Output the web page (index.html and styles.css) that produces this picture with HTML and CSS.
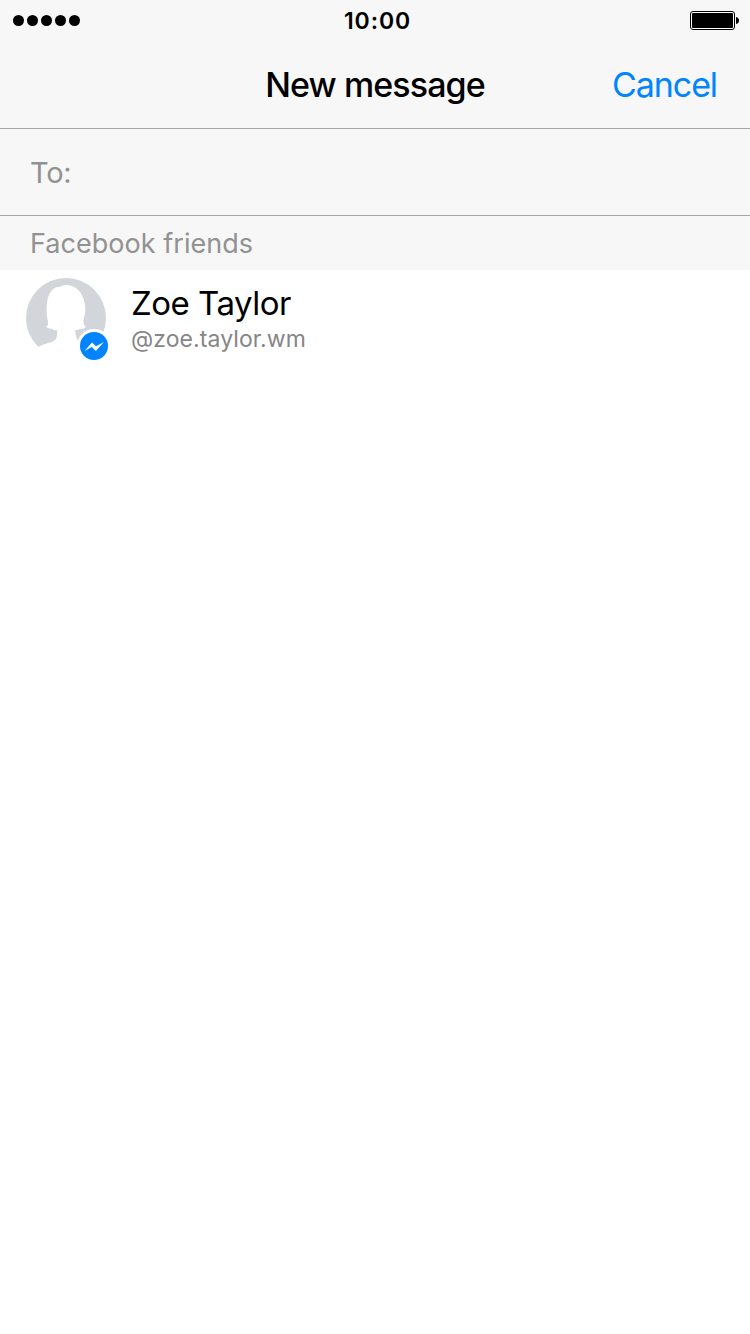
FILE: index.html
```html
<!DOCTYPE html>
<html lang="en">
<head>
  <meta charset="UTF-8">
  <meta name="viewport" content="width=device-width, initial-scale=1.0">
  <title>New message</title>
  <link rel="stylesheet" href="styles.css">
</head>
<body>
  <header>
    <div class="status-bar">
      <div class="signal">
        <span class="dot"></span>
        <span class="dot"></span>
        <span class="dot"></span>
        <span class="dot"></span>
        <span class="dot"></span>
      </div>
      <span class="time">10:00</span>
      <svg class="battery" width="50" height="20" viewBox="0 0 50 20">
        <rect x="0.5" y="1.5" width="44" height="18" rx="2.5" fill="#fff" stroke="#000"/>
        <rect x="2" y="3" width="41" height="15" rx="1" fill="#000"/>
        <path d="M46 7 Q49 7.500 49 10.500 Q49 13.500 46 14 Z" fill="#000"/>
      </svg>
    </div>
    <nav class="nav-bar">
      <h1>New message</h1>
      <a href="#" class="cancel">Cancel</a>
    </nav>
  </header>

  <div class="recipient"><span>To:</span></div>
  <h2 class="section-title"><span>Facebook friends</span></h2>

  <ul class="friends">
    <li class="friend">
      <div class="avatar">
        <svg width="80" height="80" viewBox="0 0 80 80">
          <circle cx="40" cy="40" r="40" fill="#d2d5da"/>
          <path d="M12.300 69 C17 66 25 65 29 62 C31 60 31.300 57 31.300 52 C28 52.600 27 52 25.500 50.500 C23.500 51 21.500 50 20 48.700 C22 48 22.500 46 22 43 C20.500 39 20 30 21.500 22 C23 14 27 9 34 8.700 C37 6.500 42 6.300 47 8.500 C55 12 59 21 59.300 31 C59.500 37 57 41 57.500 44 C57.700 46.500 58.500 48 60 48.700 C58 51 56 51 54 50.800 C52.500 52 51 52.300 49.300 52 C49.300 56 50 59 51.700 62 L60 80 L12.300 80 Z" fill="#fff"/>
        </svg>
        <svg class="badge" width="34" height="34" viewBox="0 0 34 34">
          <circle cx="17" cy="17" r="17" fill="#fff"/>
          <circle cx="17" cy="17" r="14" fill="#0084ff"/>
          <path d="M7.500 22 L15 13.400 L19 17.200 L27 13 L18.800 22 L14.800 18.100 Z" fill="#fff"/>
        </svg>
      </div>
      <div class="friend-info">
        <h3>Zoe Taylor</h3>
        <p>@zoe.taylor.wm</p>
      </div>
    </li>
  </ul>
</body>
</html>
```
FILE: styles.css
```css
* {
  margin: 0;
  padding: 0;
  box-sizing: border-box;
}

body {
  background: #fff;
  color: #000;
  font-family: Inter, 'Liberation Sans', sans-serif;
}

header {
  height: 129px;
  background: #f7f7f7;
  border-bottom: 1px solid #a7a7aa;
}

.status-bar {
  display: grid;
  grid-template-columns: 1fr auto 1fr;
  align-items: center;
  height: 40px;
  padding: 0 10px 0 13px;
}

.signal {
  display: flex;
  gap: 3px;
}

.dot {
  width: 11px;
  height: 11px;
  border-radius: 50%;
  background: #000;
}

.time {
  padding: 2px 0 0 2px;
  font-size: 23px;
  font-weight: 600;
  line-height: 38px;
  letter-spacing: 0.9px;
}

.battery {
  justify-self: end;
}

.nav-bar {
  display: grid;
  grid-template-columns: 1fr auto 1fr;
  align-items: center;
  height: 88px;
  padding: 0 33px;
}

.nav-bar h1 {
  grid-column: 2;
  font-size: 34px;
  font-weight: 500;
  letter-spacing: -0.9px;
}

.cancel {
  justify-self: end;
  color: #0084ff;
  font-size: 34px;
  letter-spacing: -1.1px;
  text-decoration: none;
}

.recipient {
  display: flex;
  align-items: center;
  height: 87px;
  padding: 0 30px;
  background: #f7f7f7;
  border-bottom: 1px solid #a7a7aa;
  color: #929292;
  font-size: 29px;
  letter-spacing: -0.3px;
}

.section-title {
  height: 54px;
  padding: 1px 30px 0;
  background: #f7f7f7;
  color: #929292;
  font-size: 27px;
  font-weight: 400;
  line-height: 54px;
  letter-spacing: 0.04px;
}

.friends {
  list-style: none;
}

.friend {
  display: flex;
  gap: 25px;
  padding: 8px 26px;
}

.avatar {
  position: relative;
  width: 80px;
  height: 80px;
}

.badge {
  position: absolute;
  top: 51px;
  left: 51px;
}

.friend-info {
  padding-top: 5px;
}

.friend-info h3 {
  font-size: 33px;
  font-weight: 400;
  line-height: 40px;
  letter-spacing: -0.5px;
}

.friend-info p {
  color: #868686;
  font-size: 23px;
  line-height: 32px;
  letter-spacing: 0.08px;
}
```
